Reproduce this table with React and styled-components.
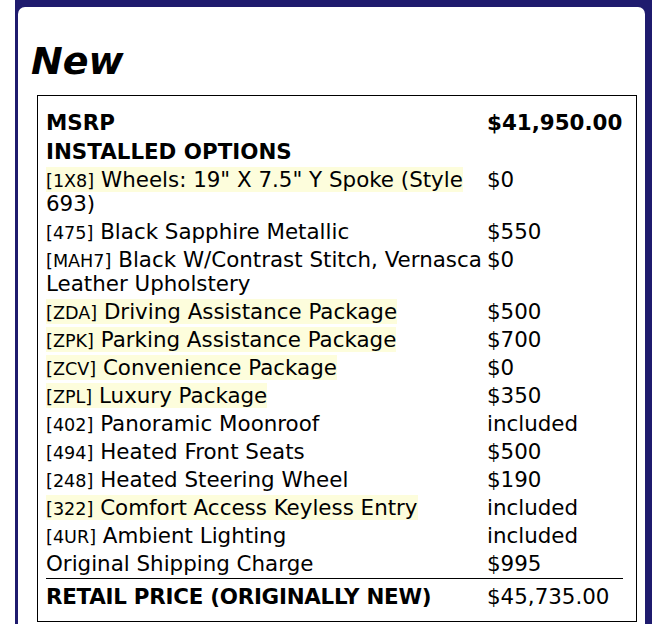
import React from "react";
import styled, { createGlobalStyle } from "styled-components";

const GlobalStyle = createGlobalStyle`
  html, body {
    margin: 0;
    padding: 0;
    background: #ffffff;
  }
  body {
    font-family: "DejaVu Sans", Verdana, sans-serif;
    color: #000;
  }
`;

const Frame = styled.div`
  margin-left: 15px;
  background: #1f1b6e;
  padding: 7px 7px 0 3px;
  height: 624px;
  box-sizing: border-box;
`;

const Card = styled.div`
  background: #ffffff;
  border-radius: 7px 7px 0 0;
  height: 100%;
  padding: 32px 8px 0 19px;
  box-sizing: border-box;
`;

const Title = styled.h1`
  margin: 0 0 12px -6px;
  font-size: 38px;
  line-height: 44px;
  font-weight: bold;
  font-style: italic;
`;

const PriceTable = styled.table`
  width: 600px;
  border: 1px solid #000;
  border-collapse: separate;
  border-spacing: 0;
  padding: 13px 13px 5px 8px;
  box-sizing: border-box;
  font-size: 21.4px;
  line-height: 24px;

  tr:first-child td {
    padding-bottom: 3px;
  }
`;

const Label = styled.td`
  width: 441px;
  vertical-align: top;
  font-weight: ${(p) => (p.$bold ? "bold" : "normal")};
  letter-spacing: ${(p) => (p.$total ? "-0.25px" : "normal")};
  border-top: ${(p) => (p.$total ? "1px solid #000" : "none")};
  padding: ${(p) => (p.$total ? "6px 0 7px" : "2px 0")};

  &::first-line {
    background: ${(p) => (p.$highlight ? "#fdfddc" : "transparent")};
  }
`;

const Price = styled.td`
  vertical-align: top;
  white-space: nowrap;
  font-weight: ${(p) => (p.$bold ? "bold" : "normal")};
  border-top: ${(p) => (p.$total ? "1px solid #000" : "none")};
  padding: ${(p) => (p.$total ? "6px 0 7px" : "2px 0")};
`;

const Code = styled.span`
  font-size: 17.6px;
  line-height: 1;
`;

const options = [
  { code: "1X8", name: 'Wheels: 19" X 7.5" Y Spoke (Style 693)', price: "$0", hl: true },
  { code: "475", name: "Black Sapphire Metallic", price: "$550" },
  { code: "MAH7", name: "Black W/Contrast Stitch, Vernasca Leather Upholstery", price: "$0" },
  { code: "ZDA", name: "Driving Assistance Package", price: "$500", hl: true },
  { code: "ZPK", name: "Parking Assistance Package", price: "$700", hl: true },
  { code: "ZCV", name: "Convenience Package", price: "$0", hl: true },
  { code: "ZPL", name: "Luxury Package", price: "$350", hl: true },
  { code: "402", name: "Panoramic Moonroof", price: "included" },
  { code: "494", name: "Heated Front Seats", price: "$500" },
  { code: "248", name: "Heated Steering Wheel", price: "$190" },
  { code: "322", name: "Comfort Access Keyless Entry", price: "included", hl: true },
  { code: "4UR", name: "Ambient Lighting", price: "included" },
];

const App = () => {
  return (
    <React.Fragment>
      <GlobalStyle />
      <Frame>
        <Card>
          <Title>New</Title>
          <PriceTable>
            <tbody>
              <tr>
                <Label $bold>MSRP</Label>
                <Price $bold>$41,950.00</Price>
              </tr>
              <tr>
                <Label $bold>INSTALLED OPTIONS</Label>
                <Price />
              </tr>
              {options.map((o) => (
                <tr key={o.code}>
                  <Label $highlight={o.hl}>
                    <Code>[{o.code}]</Code> {o.name}
                  </Label>
                  <Price>{o.price}</Price>
                </tr>
              ))}
              <tr>
                <Label>Original Shipping Charge</Label>
                <Price>$995</Price>
              </tr>
              <tr>
                <Label $bold $total>
                  RETAIL PRICE (ORIGINALLY NEW)
                </Label>
                <Price $total>$45,735.00</Price>
              </tr>
            </tbody>
          </PriceTable>
        </Card>
      </Frame>
    </React.Fragment>
  );
};

export default App;
